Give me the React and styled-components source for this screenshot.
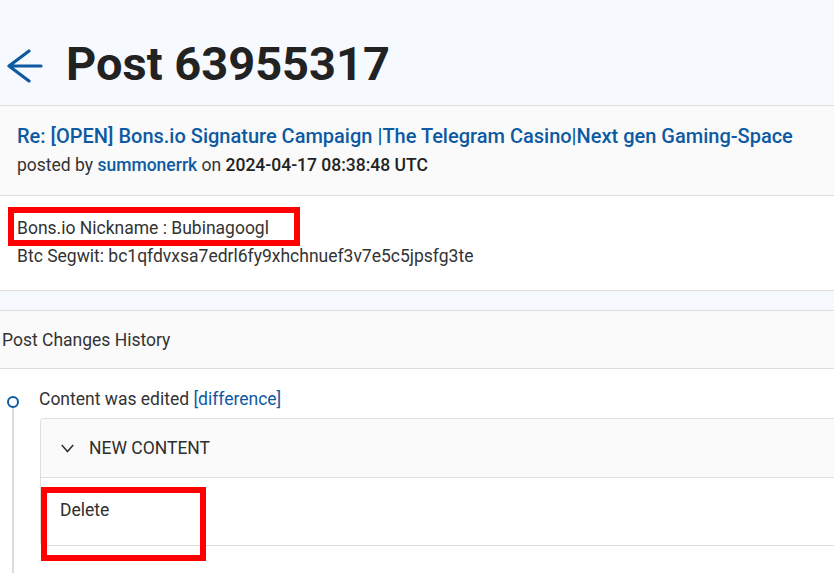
import React from 'react';
import styled, { createGlobalStyle } from 'styled-components';

const GlobalStyle = createGlobalStyle`
  html, body {
    margin: 0;
    padding: 0;
    background: #ffffff;
    font-family: Roboto, "Liberation Sans", Arial, sans-serif;
    color: #2e2e2e;
  }
  * {
    box-sizing: border-box;
  }
`;

const BLUE = '#0d5aa3';
const LINE = '#dddddd';

const Page = styled.div`
  width: 100%;
  overflow: hidden;
`;

// 상단 제목 영역
const Header = styled.header`
  height: 106px;
  padding: 36px 0 0 7px;
  display: flex;
  align-items: flex-start;
  gap: 23px;
  background: #f6f9fd;
  border-bottom: 1px solid ${LINE};

  svg {
    margin-top: 12px;
    flex-shrink: 0;
  }
`;

const Title = styled.h1`
  margin: 0;
  font-size: 47px;
  line-height: 56px;
  font-weight: 700;
  color: #222222;
`;

const PostCard = styled.section`
  background: #fafafa;
  padding: 16px 17px 18px;
  border-bottom: 1px solid ${LINE};
`;

const PostTitle = styled.a`
  display: block;
  font-size: 20px;
  line-height: 28px;
  font-weight: 500;
  color: ${BLUE};
  text-decoration: none;
`;

const PostedBy = styled.div`
  margin-top: 3px;
  font-size: 17.5px;
  line-height: 24px;
  color: #333333;

  a {
    color: ${BLUE};
    font-weight: 500;
    text-decoration: none;
  }

  strong {
    font-weight: 500;
    color: #222222;
  }
`;

const Content = styled.section`
  position: relative;
  padding: 18px 17px 20px;
  border-bottom: 1px solid ${LINE};
  font-size: 17.5px;
  line-height: 28px;
  color: #333333;
`;

// 빨간 표시 박스 (스크린샷 위 주석)
const Highlight = styled.span`
  position: absolute;
  border: 6px solid #ff0000;
  pointer-events: none;
  left: ${({ $left }) => $left}px;
  top: ${({ $top }) => $top}px;
  width: ${({ $width }) => $width}px;
  height: ${({ $height }) => $height}px;
`;

const Spacer = styled.div`
  height: 20px;
  background: #f6f9fd;
  border-bottom: 1px solid ${LINE};
`;

const HistoryHeader = styled.div`
  height: 58px;
  padding: 0 2px;
  display: flex;
  align-items: center;
  background: #fafafa;
  border-bottom: 1px solid ${LINE};
  font-size: 17.5px;
  color: #333333;
`;

const Timeline = styled.div`
  padding-top: 18px;
  display: flex;
`;

const Rail = styled.div`
  width: 26px;
  flex-shrink: 0;
  display: flex;
  flex-direction: column;
  align-items: center;
  padding-top: 9px;
`;

const Dot = styled.span`
  width: 12px;
  height: 12px;
  border-radius: 50%;
  border: 2.5px solid ${BLUE};
  background: #ffffff;
`;

const RailLine = styled.span`
  width: 2px;
  height: 200px;
  background: ${LINE};
`;

const Entry = styled.div`
  flex: 1;
  margin-left: 13px;
  margin-right: -10px;
`;

const EntryText = styled.div`
  font-size: 17.5px;
  line-height: 24px;
  color: #333333;

  a {
    color: ${BLUE};
    text-decoration: none;
  }
`;

const Accordion = styled.div`
  margin-top: 7px;
  margin-left: 1px;
  border: 1px solid ${LINE};
  border-radius: 4px 0 0 4px;
`;

const AccordionHead = styled.div`
  height: 59px;
  padding-left: 20px;
  display: flex;
  align-items: center;
  gap: 15px;
  background: #fafafa;
  border-bottom: 1px solid ${LINE};
  border-radius: 4px 0 0 0;
  font-size: 17.5px;
  color: #2e2e2e;
  text-transform: uppercase;
`;

const AccordionBody = styled.div`
  position: relative;
  padding: 20px 19px 23px;
  font-size: 17.5px;
  line-height: 24px;
  color: #2e2e2e;
  background: #ffffff;
  border-radius: 0 0 0 4px;
`;

const BackArrow = () => (
  <svg width="36" height="36" viewBox="0 0 36 36" fill="none">
    <path
      d="M34 18H2M2 18L22 3M2 18L22 33"
      stroke={BLUE}
      strokeWidth="3.2"
      strokeLinecap="round"
      strokeLinejoin="round"
    />
  </svg>
);

const Chevron = () => (
  <svg width="13" height="9" viewBox="0 0 13 9" fill="none">
    <path d="M0.8 1L6.5 7.6L12.2 1" stroke="#333333" strokeWidth="1.6" />
  </svg>
);

const App = () => {
  return (
    <Page>
      <GlobalStyle />
      <Header>
        <BackArrow />
        <Title>Post 63955317</Title>
      </Header>

      <PostCard>
        <PostTitle href="#">
          Re: [OPEN] Bons.io Signature Campaign |The Telegram Casino|Next gen Gaming-Space
        </PostTitle>
        <PostedBy>
          posted by <a href="#">summonerrk</a> on <strong>2024-04-17 08:38:48 UTC</strong>
        </PostedBy>
      </PostCard>

      <Content>
        <div>Bons.io Nickname : Bubinagoogl</div>
        <div>Btc Segwit: bc1qfdvxsa7edrl6fy9xhchnuef3v7e5c5jpsfg3te</div>
        <Highlight $left={8} $top={11} $width={292} $height={39} />
      </Content>

      <Spacer />

      <HistoryHeader>Post Changes History</HistoryHeader>

      <Timeline>
        <Rail>
          <Dot />
          <RailLine />
        </Rail>
        <Entry>
          <EntryText>
            Content was edited <a href="#">[difference]</a>
          </EntryText>
          <Accordion>
            <AccordionHead>
              <Chevron />
              New content
            </AccordionHead>
            <AccordionBody>
              Delete
              <Highlight $left={0} $top={9} $width={165} $height={74} />
            </AccordionBody>
          </Accordion>
        </Entry>
      </Timeline>
    </Page>
  );
};

export default App;
